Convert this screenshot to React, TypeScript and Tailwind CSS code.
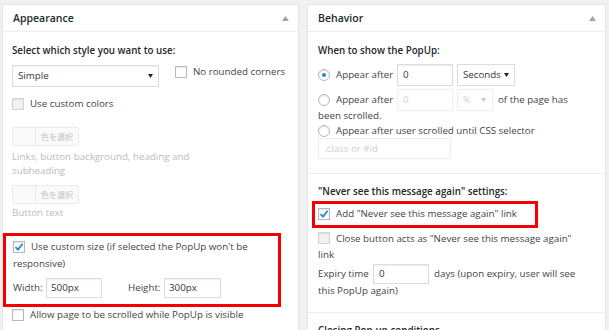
import React from 'react';

const Tri = () => (
  <svg width="7" height="5" viewBox="0 0 7 5" className="block">
    <path d="M3.5 0 L7 5 L0 5 Z" fill="#a0a5aa" />
  </svg>
);

const Arrow = ({ color = '#222' }: { color?: string }) => (
  <svg width="5" height="4" viewBox="0 0 5 4" className="block shrink-0">
    <path d="M0 0 L5 0 L2.5 4 Z" fill={color} />
  </svg>
);

const Checkbox = ({ checked = false, disabled = false }: { checked?: boolean; disabled?: boolean }) => (
  <span
    className={
      'inline-flex items-center justify-center w-[12px] h-[12px] shrink-0 border shadow-[inset_0_1px_2px_rgba(0,0,0,0.1)] ' +
      (disabled ? 'border-[#d5d5d5] bg-[#f3f3f3]' : 'border-[#b4b9be] bg-white')
    }
  >
    {checked && (
      <svg width="10" height="10" viewBox="0 0 10 10">
        <path d="M1.5 5.2 L4 7.6 L8.6 1.8" fill="none" stroke="#1e8cbe" strokeWidth="1.8" />
      </svg>
    )}
  </span>
);

const Radio = ({ checked = false }: { checked?: boolean }) => (
  <span className="inline-flex items-center justify-center w-[12px] h-[12px] shrink-0 rounded-full border border-[#b4b9be] bg-white shadow-[inset_0_1px_2px_rgba(0,0,0,0.1)]">
    {checked && <span className="w-[4px] h-[4px] rounded-full bg-[#1e8cbe]" />}
  </span>
);

const ColorBtn = () => (
  <div className="flex w-[67px] h-[19px] border border-[#ebebeb] rounded-[2px] bg-[#fafafa]">
    <div className="w-[23px] border-r border-[#ebebeb]" />
    <div className="flex-1 flex items-center pl-[5px] whitespace-nowrap text-[8px] text-[#c3c3c3] font-['Noto_Sans_CJK_JP',sans-serif]">
      色を選択
    </div>
  </div>
);

const Panel = ({ title, children }: { title: string; children: React.ReactNode }) => (
  <div className="bg-white border border-[#e5e5e5] shadow-[0_1px_1px_rgba(0,0,0,0.04)] overflow-hidden">
    <div className="h-[27px] border-b border-[#eeeeee] flex items-center justify-between pl-[10px] pr-[9px]">
      <span className="text-[10.5px] font-semibold text-[#23282d]">{title}</span>
      <Tri />
    </div>
    {children}
  </div>
);

export default function App() {
  return (
    <div className="w-[609px] h-[330px] overflow-hidden bg-[#f1f1f1] pt-[4px] pl-[2px] flex gap-[8px] items-start font-['Open_Sans',sans-serif] text-[9.75px] leading-[14px] text-[#444] whitespace-nowrap">
      {/* Appearance */}
      <div className="w-[297px]">
        <Panel title="Appearance">
          <div className="px-[9px] pt-[12px] pb-[20px]">
            <div className="font-semibold text-[#23282d]">Select which style you want to use:</div>
            <div className="mt-[7px] flex items-start">
              <div className="w-[147px] h-[22px] border border-[#dddddd] shadow-[inset_0_1px_2px_rgba(0,0,0,0.07)] flex items-center justify-between pl-[5px] pr-[5px] text-[#32373c]">
                <span>Simple</span>
                <Arrow />
              </div>
              <div className="ml-[16px] flex items-center gap-[6px] h-[14px]">
                <Checkbox />
                <span>No rounded corners</span>
              </div>
            </div>
            <div className="mt-[10px] flex items-center gap-[6px]">
              <Checkbox disabled />
              <span>Use custom colors</span>
            </div>
            <div className="mt-[16px]">
              <ColorBtn />
            </div>
            <div className="mt-[4px] text-[#b9bcbf]">
              Links, button background, heading and
              <br />
              subheading
            </div>
            <div className="mt-[7px]">
              <ColorBtn />
            </div>
            <div className="mt-[2px] text-[#b9bcbf]">Button text</div>

            <div className="relative mt-[19px]">
              <div className="absolute left-[-9px] top-[-6px] w-[278px] h-[74px] border-[3px] border-[#f50000] pointer-events-none" />
              <div className="leading-[15px] pl-[1px]">
                <span className="inline-block align-[-2px] mr-[6px]">
                  <Checkbox checked />
                </span>
                Use custom size (if selected the PopUp won't be
                <br />
                responsive)
              </div>
              <div className="mt-[7px] flex items-center pl-[1px]">
                <span className="w-[33px]">Width:</span>
                <div className="w-[56px] h-[20px] border border-[#dddddd] shadow-[inset_0_1px_2px_rgba(0,0,0,0.07)] flex items-center pl-[4px] text-[#32373c]">
                  500px
                </div>
                <span className="ml-[26px] w-[36px]">Height:</span>
                <div className="w-[57px] h-[20px] border border-[#dddddd] shadow-[inset_0_1px_2px_rgba(0,0,0,0.07)] flex items-center pl-[4px] text-[#32373c]">
                  300px
                </div>
              </div>
            </div>
            <div className="mt-[10px] flex items-center gap-[6px]">
              <Checkbox />
              <span>Allow page to be scrolled while PopUp is visible</span>
            </div>
          </div>
        </Panel>
      </div>

      {/* Behavior */}
      <div className="w-[299px]">
        <Panel title="Behavior">
          <div className="px-[10px] pt-[12px] pb-[14px]">
            <div className="font-semibold text-[#23282d]">When to show the PopUp:</div>
            <div className="mt-[6px] h-[22px] flex items-center">
              <Radio checked />
              <span className="ml-[6px] w-[61px] shrink-0">Appear after</span>
              <div className="w-[56px] h-[22px] shrink-0 border border-[#dddddd] shadow-[inset_0_1px_2px_rgba(0,0,0,0.07)] flex items-center pl-[5px] text-[#32373c]">
                0
              </div>
              <div className="ml-[4px] w-[58px] h-[22px] shrink-0 border border-[#dddddd] flex items-center justify-between pl-[5px] pr-[5px] text-[#32373c]">
                <span>Seconds</span>
                <Arrow />
              </div>
            </div>
            <div className="mt-[4px] h-[20px] flex items-center">
              <Radio />
              <span className="ml-[6px] w-[61px] shrink-0">Appear after</span>
              <div className="w-[56px] h-[22px] shrink-0 border border-[#eeeeee] flex items-center pl-[5px] text-[#d0d0d0]">
                0
              </div>
              <div className="ml-[4px] w-[36px] h-[22px] shrink-0 border border-[#eeeeee] flex items-center justify-between pl-[5px] pr-[6px] text-[#d0d0d0] text-[8.5px]">
                <span>%</span>
                <Arrow color="#c8c8c8" />
              </div>
              <span className="ml-[5px]">of the page has</span>
            </div>
            <div className="mt-[-1px]">been scrolled.</div>
            <div className="mt-[1px] flex items-center gap-[6px]">
              <Radio />
              <span>Appear after user scrolled until CSS selector</span>
            </div>
            <div className="mt-[0px] w-[133px] h-[21px] border border-[#eeeeee] flex items-center pl-[5px] text-[#d0d0d0]">
              .class or #id
            </div>
          </div>

          <div className="border-t border-[#eeeeee] px-[10px] pt-[11px] pb-[14px]">
            <div className="font-semibold text-[#23282d]">"Never see this message again" settings:</div>
            <div className="relative mt-[8px]">
              <div className="absolute left-[-6px] top-[-6px] w-[226px] h-[27px] border-[3px] border-[#f50000] pointer-events-none" />
              <div className="flex items-center gap-[6px]">
                <Checkbox checked />
                <span>Add "Never see this message again" link</span>
              </div>
            </div>
            <div className="mt-[11px]">
              <span className="inline-block align-[-2px] mr-[6px]">
                <Checkbox disabled />
              </span>
              Close button acts as "Never see this message again"
              <br />
              link
            </div>
            <div className="mt-[2px] h-[20px] flex items-center">
              <span className="w-[55px] shrink-0">Expiry time</span>
              <div className="w-[56px] h-[20px] shrink-0 border border-[#dddddd] shadow-[inset_0_1px_2px_rgba(0,0,0,0.07)] flex items-center pl-[5px] text-[#32373c]">
                0
              </div>
              <span className="ml-[5px]">days (upon expiry, user will see</span>
            </div>
            <div>this PopUp again)</div>
          </div>

          <div className="border-t border-[#eeeeee] px-[10px] pt-[11px] pb-[10px]">
            <div className="font-semibold text-[#23282d]">Closing Pop-up conditions</div>
          </div>
        </Panel>
      </div>
    </div>
  );
}
